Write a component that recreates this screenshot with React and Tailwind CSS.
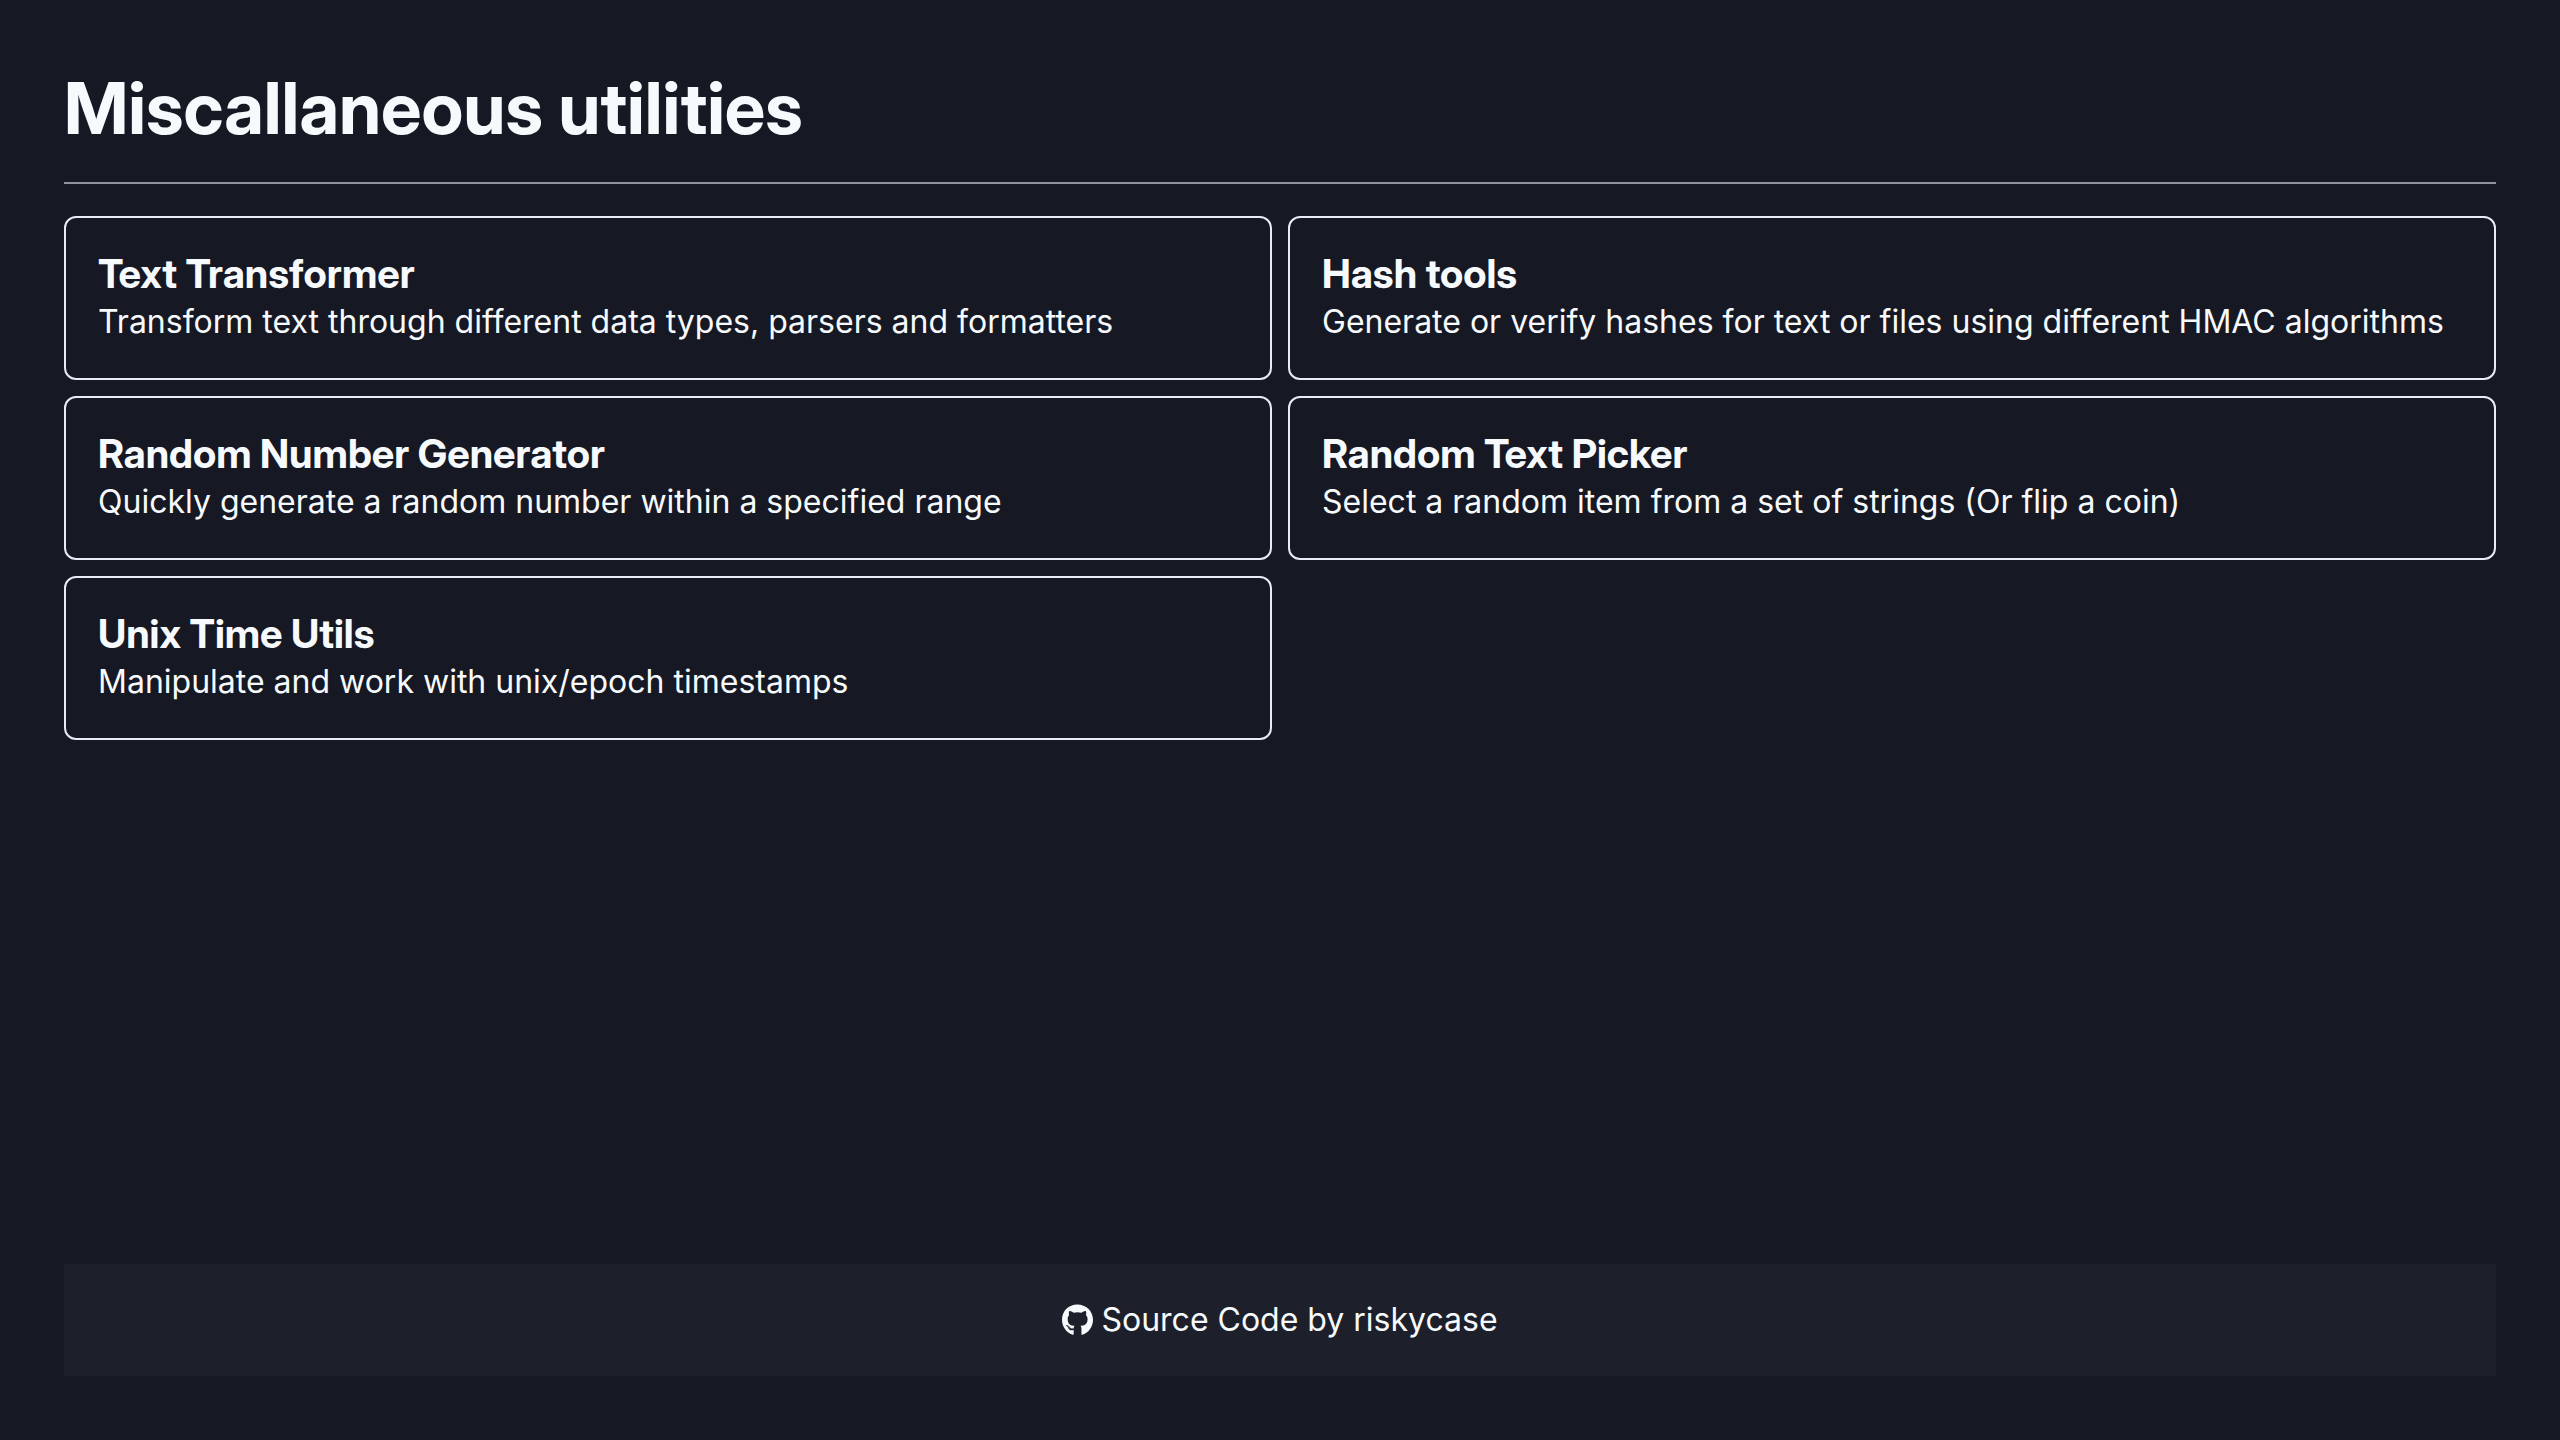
import React from "react";
import { FaGithub } from "react-icons/fa";

const tools = [
  ["Text Transformer", "Transform text through different data types, parsers and formatters"],
  ["Hash tools", "Generate or verify hashes for text or files using different HMAC algorithms"],
  ["Random Number Generator", "Quickly generate a random number within a specified range"],
  ["Random Text Picker", "Select a random item from a set of strings (Or flip a coin)"],
  ["Unix Time Utils", "Manipulate and work with unix/epoch timestamps"],
];

export default function App() {
  return (
    <div className="flex min-h-screen flex-col bg-[#161823] p-16 font-['Inter',sans-serif] text-[32px] leading-12 text-[#f7fafc]">
      <h1 className="font-['Inter_Display','Inter',sans-serif] text-[72px] leading-[88px] font-bold">
        Miscallaneous utilities
      </h1>
      <hr className="mt-[30px] mb-8 border-t-2 border-[#90929c]" />
      <main className="grid flex-1 grid-cols-2 content-start gap-4">
        {tools.map(([title, text]) => (
          <a key={title} href="#" className="block rounded-xl border-2 border-[#e9ebf4] p-8">
            <h2 className="font-['Inter_Display','Inter',sans-serif] text-[40px] leading-12 font-bold">{title}</h2>
            <p>{text}</p>
          </a>
        ))}
      </main>
      <footer className="flex justify-center bg-[#1d202b] p-8">
        <a href="#" className="flex items-center gap-2">
          <FaGithub className="h-8 w-[31px]" aria-hidden="true" />
          Source Code by riskycase
        </a>
      </footer>
    </div>
  );
}
